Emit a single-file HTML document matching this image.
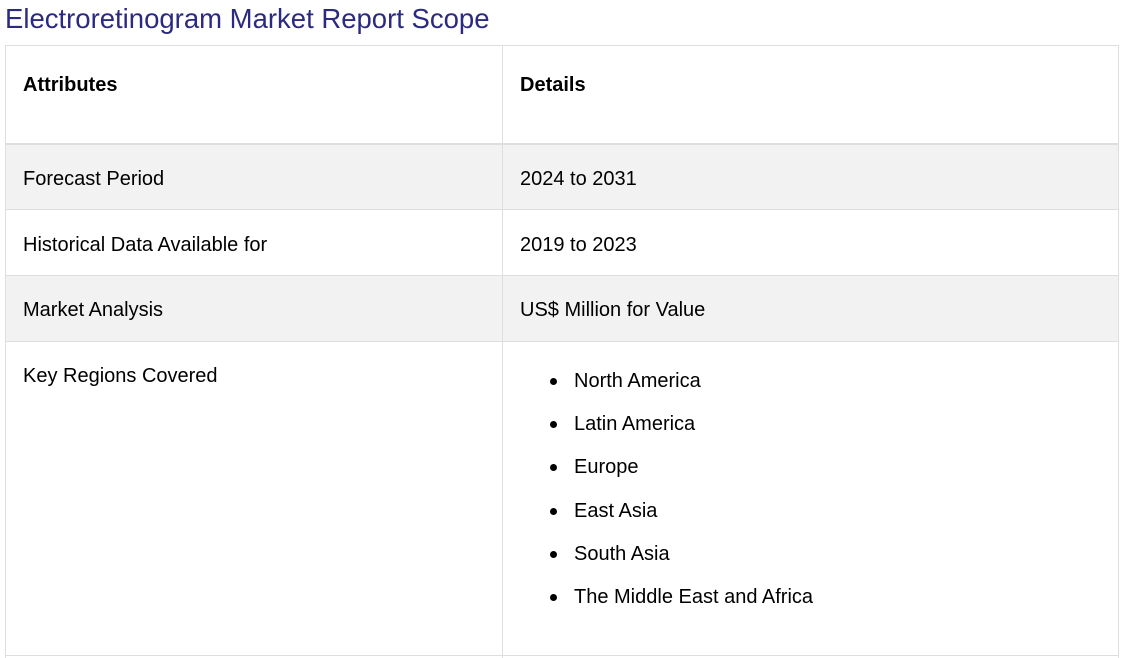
<!DOCTYPE html>
<html><head><style>
*{margin:0;padding:0;box-sizing:border-box}
body{width:1123px;height:658px;background:#fff;font-family:"Liberation Sans",sans-serif;color:#000;position:relative;overflow:hidden}
.t{position:absolute;white-space:nowrap;font-size:20px;line-height:24px}
.h{position:absolute;font-size:27.5px;color:#2b2a80;left:5px;top:3px;line-height:32px;white-space:nowrap}
.hl{position:absolute;left:5px;width:1114px;height:1px;background:#dedede}
.vl{position:absolute;width:1px;background:#dedede}
.bg{position:absolute;left:6px;width:1112px;background:#f2f2f2}
ul{position:absolute;left:552px;list-style:none}
li{font-size:20px;line-height:24px;height:43.2px;position:relative}
li:before{content:"";position:absolute;left:-2px;top:9px;width:7px;height:7px;border-radius:50%;background:#000}
li span{padding-left:22px}
</style></head><body>
<div class="h">Electroretinogram Market Report Scope</div>
<div class="bg" style="top:145px;height:64px"></div>
<div class="bg" style="top:276px;height:65px"></div>
<div class="hl" style="top:45px"></div>
<div class="hl" style="top:143px;height:2px"></div>
<div class="hl" style="top:209px"></div>
<div class="hl" style="top:275px"></div>
<div class="hl" style="top:341px"></div>
<div class="hl" style="top:655px"></div>
<div class="vl" style="left:5px;top:45px;height:613px"></div>
<div class="vl" style="left:502px;top:45px;height:613px"></div>
<div class="vl" style="left:1118px;top:45px;height:613px"></div>
<div class="t" style="left:23px;top:73px;font-weight:bold">Attributes</div>
<div class="t" style="left:520px;top:73px;font-weight:bold">Details</div>
<div class="t" style="left:23px;top:167px">Forecast Period</div>
<div class="t" style="left:520px;top:167px">2024 to 2031</div>
<div class="t" style="left:23px;top:233px">Historical Data Available for</div>
<div class="t" style="left:520px;top:233px">2019 to 2023</div>
<div class="t" style="left:23px;top:298px">Market Analysis</div>
<div class="t" style="left:520px;top:298px">US$ Million for Value</div>
<div class="t" style="left:23px;top:364px">Key Regions Covered</div>
<ul style="top:369px">
<li><span>North America</span></li>
<li><span>Latin America</span></li>
<li><span>Europe</span></li>
<li><span>East Asia</span></li>
<li><span>South Asia</span></li>
<li><span>The Middle East and Africa</span></li>
</ul>
</body></html>
